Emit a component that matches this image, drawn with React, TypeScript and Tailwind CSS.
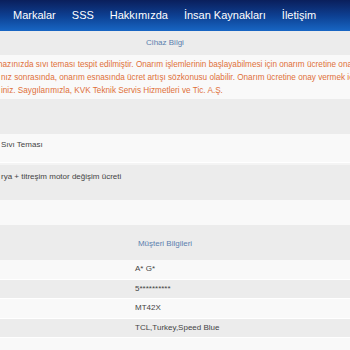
const navItems = ["Markalar", "SSS", "Hakkımızda", "İnsan Kaynakları", "İletişim"];

const customer = [
  { value: "A* G*", bg: "bg-[#f9f9f9]" },
  { value: "5**********", bg: "bg-[#ececec]" },
  { value: "MT42X", bg: "bg-[#f9f9f9]" },
  { value: "TCL,Turkey,Speed Blue", bg: "bg-[#ececec]" },
];

export default function App() {
  return (
    <div className="h-[350px] w-[350px] overflow-hidden bg-[#f9f9f9] font-['Liberation_Sans',Arial,sans-serif]">
      <nav className="flex h-[31px] items-center gap-[16px] bg-gradient-to-b from-[#0a1f5c] via-[#0d3f91] to-[#1866c4] pl-[13px] text-[11px] text-white">
        {navItems.map((item) => (
          <span key={item} className="whitespace-nowrap">
            {item}
          </span>
        ))}
      </nav>

      <div className="flex h-[24px] items-center justify-center bg-[#ececec] pr-[20px] text-[8px] text-[#5b7fae]">
        Cihaz Bilgi
      </div>

      <div className="h-[44px] overflow-hidden bg-[#f9f9f9] pt-[3px] text-[8.2px] leading-[13px] text-[#e0703a]">
        <div className="ml-[-2px] whitespace-nowrap">
          hazınızda sıvı teması tespit edilmiştir. Onarım işlemlerinin başlayabilmesi için onarım ücretine onay vermeniz gerekmektedir.
        </div>
        <div className="ml-[1px] whitespace-nowrap">
          nız sonrasında, onarım esnasında ücret artışı sözkonusu olabilir. Onarım ücretine onay vermek için bizi arayabilirsiniz.
        </div>
        <div className="ml-[1px] whitespace-nowrap">
          iniz. Saygılarımızla, KVK Teknik Servis Hizmetleri ve Tic. A.Ş.
        </div>
      </div>

      <div className="h-[35px] bg-[#ececec]" />

      <div className="h-[29px] whitespace-nowrap border-b border-white bg-[#f9f9f9] pl-[1px] pt-[5px] text-[8px] text-[#444]">
        Sıvı Teması
      </div>

      <div className="h-[37px] whitespace-nowrap border-t-2 border-[#f4f4f4] bg-[#ececec] pl-[1px] pt-[6px] text-[8px] text-[#444]">
        rya + titreşim motor değişim ücreti
      </div>

      <div className="h-[25px] bg-[#f9f9f9]" />

      <div className="flex h-[35px] items-center justify-center bg-[#ececec] pr-[20px] pt-[2px] text-[8px] text-[#5b7fae]">
        Müşteri Bilgileri
      </div>

      {customer.map((row) => (
        <div
          key={row.value}
          className={`flex h-[19.5px] items-center whitespace-nowrap border-b border-white pl-[135px] text-[8px] text-[#444] ${row.bg}`}
        >
          {row.value}
        </div>
      ))}
    </div>
  );
}
